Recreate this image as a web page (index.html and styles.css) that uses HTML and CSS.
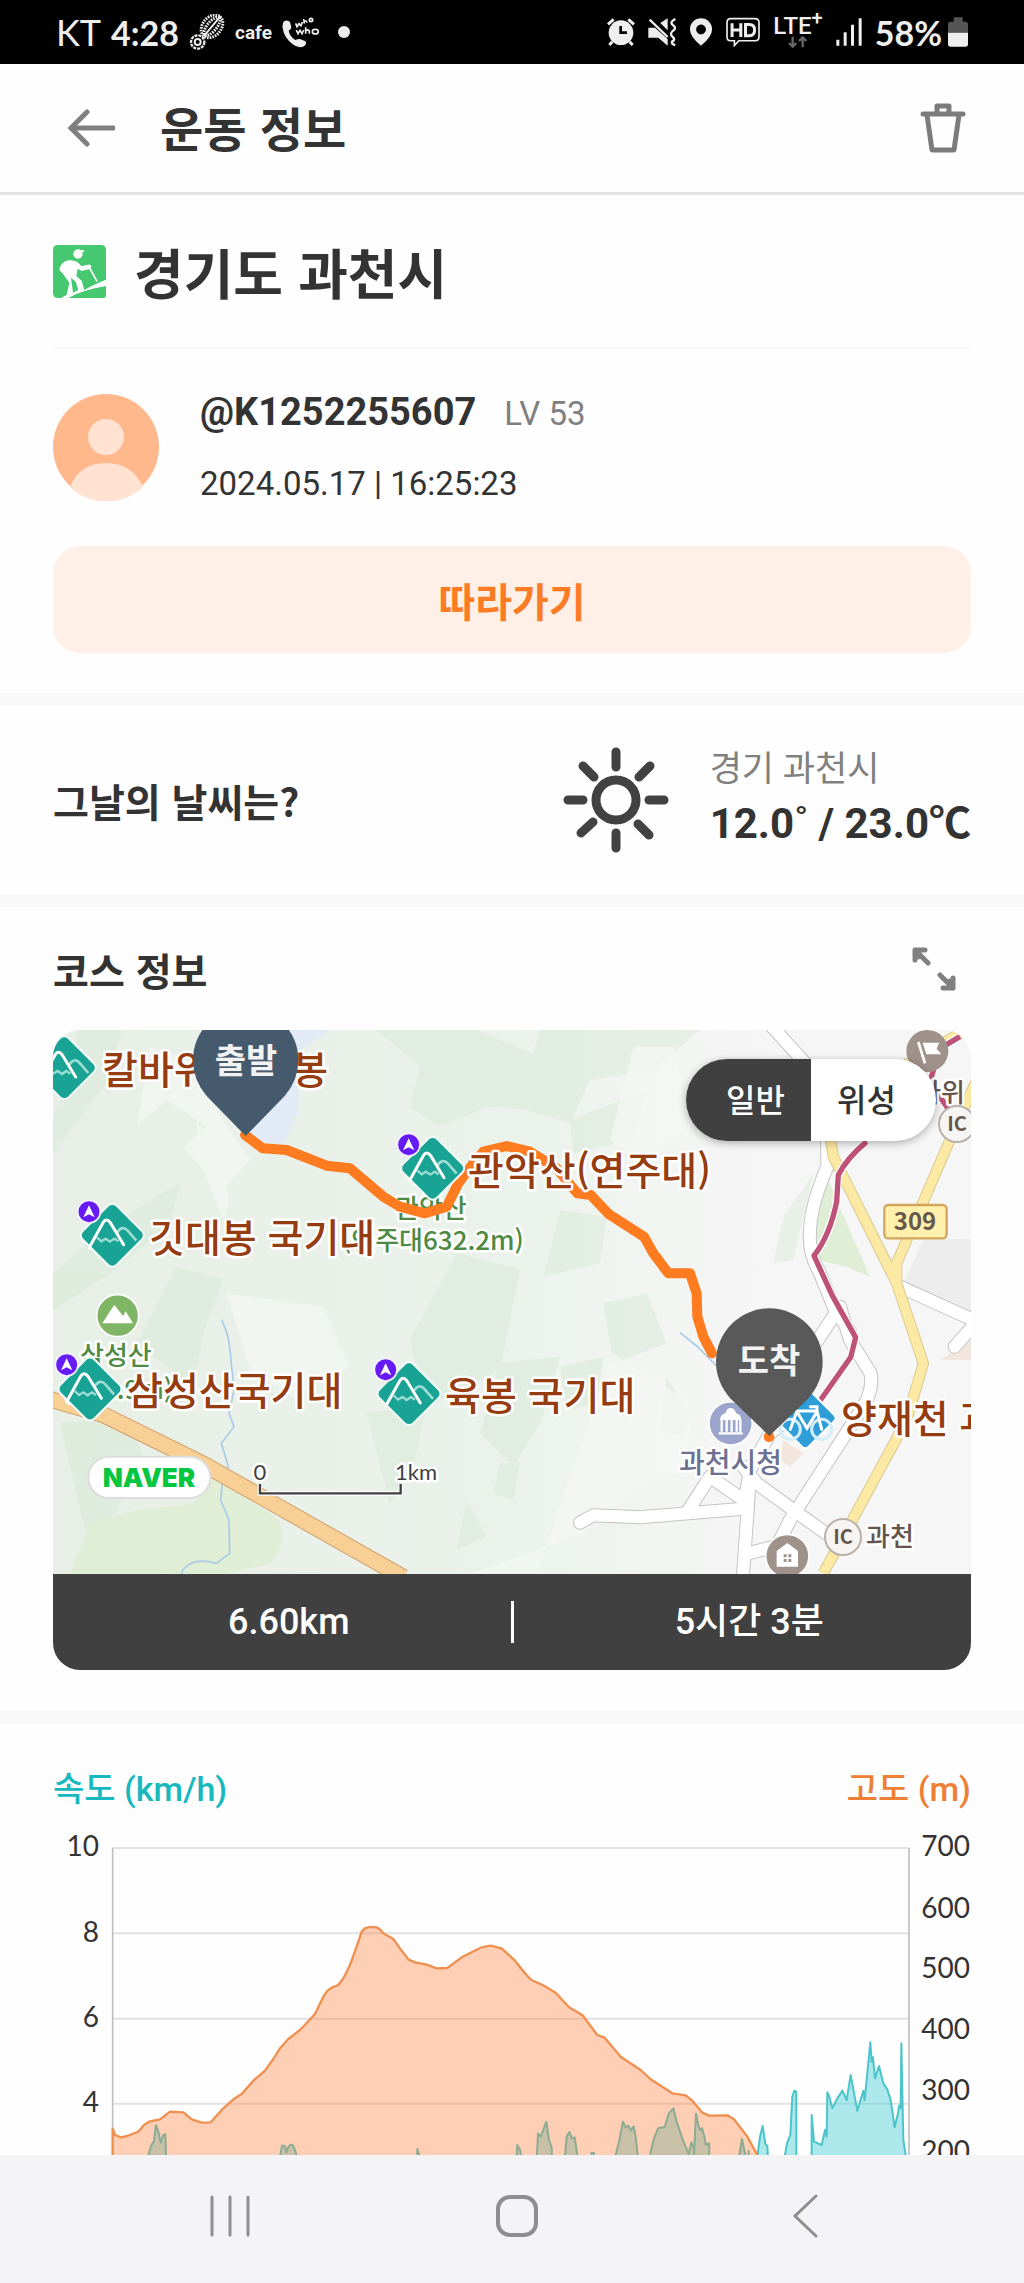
FILE: index.html
```html
<!DOCTYPE html>
<html lang="ko">
<head>
    <meta charset="UTF-8">
    <meta name="viewport" content="width=device-width, initial-scale=1">
    <title>운동 정보</title>
    <link rel="stylesheet" href="styles.css">
</head>
<body>
    <div class="status">
        <span class="carrier">KT</span>
        <span class="clock">4:28</span>
        <svg width="36" height="36" viewBox="568 44 108 108" fill="none" stroke="#eee">
            <g transform="rotate(-50 637 81)">
                <ellipse cx="637" cy="81" rx="38" ry="28" stroke-width="9" stroke-dasharray="5 3"/>
                <ellipse cx="637" cy="81" rx="34" ry="14" stroke-width="9" stroke-dasharray="5 3"/>
                <path d="M600 81h74" stroke-width="6"/>
            </g>
            <circle cx="594" cy="128" r="20" stroke-width="7" stroke-dasharray="9 3"/>
            <circle cx="594" cy="128" r="9" stroke-width="6"/>
        </svg>
        <span class="cafe">cafe</span>
        <svg width="38" height="32" viewBox="832 50 114 96">
            <path d="M838 66q10-6 18 2l4 16q0 6-8 10q4 18 20 28q10-4 16-2l14 6q6 8-4 15q-16 8-34-6q-26-20-30-48q-2-14 4-21z" fill="#eee"/>
            <path d="M873 72l4 10 6-9 6 6 4-11M897 59l2 14M899 67q6-5 8 3M914 62a5 5 0 1 0 10 0a5 5 0 1 0-10 0M875 92l5 11 6-10 6 10 5-11M903 84v19M903 95q8-7 11 1v7M923 97a8 6 0 1 0 18 0a8 6 0 1 0-18 0" fill="none" stroke="#eee" stroke-width="5"/>
        </svg>
        <span class="dot"></span>
        <div class="status-right">
            <svg width="28" height="28" viewBox="284 55 84 84">
                <circle cx="326" cy="99" r="37" fill="#eee"/>
                <path d="M287 74l17-15M365 74l-17-15M300 126l-9 10M352 126l9 10" stroke="#eee" stroke-width="9"/>
                <path d="M325 79v20h19" fill="none" stroke="#000" stroke-width="8"/>
            </svg>
            <svg width="28" height="28" viewBox="412 55 84 84">
                <path d="M413 84h20l38 34v20l-28-24h-30zM449 70l22-14v36z" fill="#eee"/>
                <path d="M417 60l54 52M494 58q-18 9-8 18q14 9 0 18q-10 9 0 18q10 8-2 14q-2 8 10 10" fill="none" stroke="#eee" stroke-width="7"/>
            </svg>
            <svg width="24" height="28" viewBox="541 53 72 86">
                <path d="M577 54a34 34 0 0 1 34 34q0 22-34 50q-34-28-34-50a34 34 0 0 1 34-34zM577 73a15 15 0 1 0 .1 0z" fill="#eee" fill-rule="evenodd"/>
            </svg>
            <svg width="34" height="30" viewBox="658 55 101 88" fill="none" stroke="#eee">
                <path d="M672 59h72q12 0 12 12v42q0 12-12 12h-48l-13 14v-14h-11q-11 0-11-12V71q0-12 11-12z" stroke-width="5"/>
                <path d="M676 73v41M702 73v41M676 93h26M716 77v33h11q16 0 16-17q0-16-16-16z" stroke-width="9"/>
            </svg>
            <div class="lte">
                <span>LTE<sup>+</sup></span>
                <svg width="20" height="12" viewBox="818 106 60 36" fill="none" stroke="#666" stroke-width="7">
                    <path d="M832 108v30M821 127l11 11 11-11M862 140v-30M851 121l11-11 11 11"/>
                </svg>
            </div>
            <svg width="26" height="28" viewBox="975 54 78 84" fill="#eee">
                <path d="M976 119h9v18h-9zM998 97h9v40h-9zM1020 74h9v63h-9zM1043 55h9v82h-9z"/>
            </svg>
            <div class="battery">
                <span class="percent">58%</span>
                <svg width="20" height="30" viewBox="1308 52 60 90">
                    <path d="M1325 53h27v13h8q8 0 8 8v25h-60V74q0-8 8-8h9z" fill="#555"/>
                    <path d="M1308 99h60v34q0 8-8 8h-44q-8 0-8-8z" fill="#eee"/>
                </svg>
            </div>
        </div>
    </div>

    <header class="topbar">
        <button class="icon-btn" aria-label="뒤로">
            <svg width="48" height="40" viewBox="0 0 48 40" fill="none" stroke="#808080" stroke-width="5" stroke-linecap="round">
                <path d="M20 4L4 20l16 16M4 20h42" />
            </svg>
        </button>
        <h1>운동 정보</h1>
        <button class="icon-btn" aria-label="삭제">
            <svg width="46" height="50" viewBox="0 0 46 50" fill="none" stroke="#7c7c7c" stroke-width="5" stroke-linecap="round" stroke-linejoin="round">
                <path d="M3 11h40M7 12l5 35h22l5-35"/>
                <path d="M17 10V3h12v7"/>
            </svg>
        </button>
    </header>

    <main>
        <section class="summary">
            <div class="place">
                <svg width="53" height="53" viewBox="160 734 159 159">
                    <rect x="160" y="734" width="159" height="159" rx="14" fill="#46c870"/>
                    <circle cx="235" cy="761" r="14" fill="#fff"/>
                    <path d="M233 749h20v6h-20z" fill="#fff"/>
                    <path d="M319 824v34q-75 12-112 35h-22l16-10 8-36-20-28q-12-6-9-16q6-18 26-23q14-2 26 4l14 14 18-5q10-2 11 6q0 6-7 8l-22 5-12-7-4 22 16 14 8 28q24-15 65-31q12-7 20-14z" fill="#fff"/>
                    <path d="M268 800l24 43" stroke="#fff" stroke-width="5"/>
                    <path d="M214 832l14 12 8 25-16 8z" fill="#46c870"/>
                    <path d="M319 858v27q0 8-8 8H207q50-25 112-35z" fill="#46c870"/>
                </svg>
                <h2>경기도 과천시</h2>
            </div>
            <div class="profile">
                <svg class="avatar" width="107" height="107" viewBox="0 0 107 107">
                    <circle cx="53" cy="53" r="53" fill="#ffb88c"/>
                    <circle cx="53" cy="43" r="18" fill="#ffe2d1"/>
                    <path d="M17 93C23 77 36 69 53 69s30 8 37 24a53 53 0 0 1-73 0z" fill="#ffe2d1"/>
                </svg>
                <div>
                    <p><strong class="nick">@K1252255607</strong><span class="level">LV 53</span></p>
                    <p class="date">2024.05.17 | 16:25:23</p>
                </div>
            </div>
            <button class="follow">따라가기</button>
        </section>

        <section class="weather">
            <h3>그날의 날씨는?</h3>
            <svg width="106" height="106" viewBox="-53 -53 106 106" fill="none" stroke="#424242" stroke-width="9" stroke-linecap="round">
                <circle r="20"/>
                <path d="M0-33v-15M0 33v15M-33 0h-15M33 0h15M-22-23l-11-11M23-23l11-11M-23 22l-12 11M22 24l11 11"/>
            </svg>
            <div>
                <p class="region">경기 과천시</p>
                <p class="temp">12.0˚ / 23.0℃</p>
            </div>
        </section>

        <section class="course">
            <div class="course-head">
                <h3>코스 정보</h3>
                <button class="icon-btn" aria-label="전체 화면">
                    <svg width="44" height="44" viewBox="0 0 44 44" fill="none" stroke="#808080" stroke-width="5" stroke-linecap="round" stroke-linejoin="round">
                        <path d="M3 13V3h10M3 3l13 13M6 5v5M41 31v10H31M41 41L28 28M38 39v-5"/>
                    </svg>
                </button>
            </div>
            <div class="card">
                <div class="map">
                    <svg class="map-svg" viewBox="0 0 918 544">
                        <defs>
                            <linearGradient id="ground" x1="0" x2="1" y1="0" y2="0">
                                <stop offset="0" stop-color="#e7efe7"/>
                                <stop offset=".5" stop-color="#ebf2eb"/>
                                <stop offset=".68" stop-color="#f3f5f3"/>
                                <stop offset=".8" stop-color="#f6f6f6"/>
                            </linearGradient>
                            <g id="peak">
                                <rect x="-72" y="-72" width="144" height="144" rx="18" transform="rotate(45)" fill="#19a394" stroke="#f3fbf8" stroke-width="6"/>
                                <path d="M14-8q16-24 32-6l26 30" fill="none" stroke="#9bdcd3" stroke-width="8"/>
                                <path d="M-46 6l13 12 13-8 13 9 13-9 12 8" fill="none" stroke="#9bdcd3" stroke-width="7"/>
                                <path d="M-70 38l42-76q10-16 22 0l40 66" fill="none" stroke="#fff" stroke-width="9" stroke-linecap="round"/>
                            </g>
                            <g id="compass">
                                <circle r="34" fill="#661bf5" stroke="#f4f0ff" stroke-width="5"/>
                                <path d="M0-19l17 36-17-9-17 9z" fill="#fff"/>
                            </g>
                            <g id="roads" fill="none" stroke-linejoin="round" stroke-linecap="round">
                                <path d="M2196 20L2360 200 2362 440Q2310 560 2310 640Q2305 700 2340 760L2385 870 2430 935"/>
                                <path d="M2300 1010L2400 860 2430 960 2492 1060Q2500 1110 2470 1160L2250 1500 2200 1600"/>
                                <path d="M2580 800L2800 900"/>
                                <path d="M2850 860L2744 980"/>
                                <path d="M1620 1508L1660 1486 1800 1492 2110 1466 2130 1350 2190 1240 2240 1200"/>
                                <path d="M2110 1340L2150 1390 2260 1470 2400 1570"/>
                                <path d="M2130 1370L2108 1680M2125 1600L2220 1575M1940 1478L2010 1370 2110 1440"/>
                            </g>
                            <path id="yellow" d="M2370 350l10 60 190 380 60 180 20 60-50 170-250 460M2570 790v-60l190-440 60-130M2570 150l190-110"/>
                            <path id="line4" d="M2760 50l-60 35-30 100 60 90M2480 365q-60 50-85 100l-5 80q-20 100-68 162l55 120 70 125-15 60-120 170"/>
                        </defs>
                        <rect width="918" height="544" fill="url(#ground)"/>
                        <g transform="translate(-13 -10) scale(.33333)">
                            <!-- forest -->
                            <g fill="#d3e8d3" opacity=".42">
                                <path d="M110 30h135l-40 150-165 220v-120l70-100zM1010 30h300l190 80-20 160-140-10-140 60-90-60 30-120z"/>
                                <path d="M40 760l160-140 220-130-30 120-180 150-170 110zM410 740l140 40-60 160-30 160-170-130z"/>
                                <path d="M1250 700l190 50-60 300-220 110-50-200z"/>
                                <path d="M1500 30h480l-140 120-190 30-60 130-160-50zM1590 300l230-90-40 150-180 40z"/>
                                <path d="M1560 570l140 20-20 140-170 40zM1690 850l130-30 60 150-160 60zM2230 590l90-130-60 260-60 10z"/>
                                <path d="M1380 1030l180-20-60 200-80 130-100-100zM980 1180l180-30-40 190-70 110zM1380 1330h60l-20 110-60-20zM1280 1440l60 110-90 40z"/>
                                <path d="M60 1210l200-20 50 120-90 180-80 60zM1560 1040l130-30-20 140-90 20zM1880 1070l70 120-20 60-70-20z"/>
                            </g>
                            <g fill="#f4f7f3" opacity=".75">
                                <path d="M330 80l120 40 60 120 120 180-80 90-60-60-60-70 70-60-120-80-90 80z"/>
                                <path d="M470 300l60 120 40 120-20 60-70-180zM1780 80l120 0 60 240-160 100-90-60z"/>
                                <path d="M1720 1000l220 140 30 200-180 60-160 140-340 120h200z"/>
                                <path d="M560 820l290 40 80 180-170 90-130-80z"/>
                            </g>
                            <path d="M740 30h130l-90 60-5 180-40 100h-70l-50-20 110-120z" fill="#e2eaf5"/>
                            <path d="M2360 470l130 300-70-30-90-20q-10-90 30-250zM90 1661l60-150 140-40 170-20 60-80 200 130q20 80-30 130l-140 31z" fill="#e1eed6"/>
                            <path d="M2590 790l60-130 150-5v240z" fill="#ededed"/>
                            <path d="M2700 1020l93-60v60zM2230 1260l60 40-40 40-30-20z" fill="#f2e6de"/>
                            <!-- streams -->
                            <path d="M545 900q20 40 25 90l12 120-15 70 15 40-38 50 18 60q10 40-15 60l-5 50 25 60 2 100-40 30q-70-20-100 20-20 60-70 55-60-40-120-30-40 20-70 50M1920 938l50 40 60 60" fill="none" stroke="#a9cbe8" stroke-width="5"/>
                            <!-- roads -->
                            <use href="#roads" stroke="#c4c4c4" stroke-width="42"/>
                            <use href="#roads" stroke="#fff" stroke-width="36"/>
                            <g fill="none" stroke-linejoin="round">
                                <path d="M30 1138l160 46 300 148 600 340" stroke="#cfa06a" stroke-width="50"/>
                                <path d="M30 1138l160 46 300 148 600 340" stroke="#f8cf95" stroke-width="44"/>
                                <use href="#yellow" stroke="#d9c98f" stroke-width="34"/>
                                <use href="#yellow" stroke="#fbe9a4" stroke-width="28"/>
                                <use href="#line4" stroke="#fff" stroke-width="24"/>
                                <use href="#line4" stroke="#bf5278" stroke-width="16"/>
                            </g>
                        </g>
                        <g class="area">
                            <text x="342" y="188">관악산</text>
                            <text x="289" y="220">(연주대632.2m)</text>
                            <text x="27" y="335">삼성산</text>
                            <text x="10" y="369">(480.9m)</text>
                        </g>
                        <g transform="translate(-13 -10) scale(.33333)">
                            <!-- course -->
                            <path d="M615 345l53 40 72 5 120 47 70 8 100 85 50 30 75 20 65-20 35-70 45-60 30-35 70-17 70 17 80 50 62 75 40 5 55 58 105 67 28 50 45 60h65l20 60 2 70 18 60 26 50" fill="none" stroke="#ff7b1f" stroke-width="30" stroke-linejoin="round" stroke-linecap="round"/>
                            <circle cx="2187" cy="1250" r="16" fill="#ff7b1f"/>
                            <use href="#peak" x="73" y="143"/>
                            <use href="#peak" x="1178" y="445"/>
                            <use href="#compass" x="1106" y="374"/>
                            <use href="#peak" x="217" y="646"/>
                            <use href="#compass" x="147" y="575"/>
                            <!-- Samseongsan -->
                            <circle cx="233" cy="887" r="63" fill="#7fb564" stroke="#fff" stroke-width="5"/>
                            <path d="M187 910l36-56 26 34 8-14 22 36z" fill="#fff"/>
                            <use href="#peak" x="150" y="1107"/>
                            <use href="#compass" x="80" y="1034"/>
                            <use href="#peak" x="1107" y="1121"/>
                            <use href="#compass" x="1037" y="1049"/>
                            <!-- city hall -->
                            <circle cx="2072" cy="1210" r="65" fill="#9ba4cb" stroke="#fff" stroke-width="5"/>
                            <path d="M2036 1240h72M2045 1235v-35M2060 1235v-35M2075 1235v-35M2090 1235v-35M2101 1235v-35" stroke="#fff" stroke-width="7"/>
                            <path d="M2040 1200q2-18 16-20q4-16 16-16t16 16q14 2 16 20z" fill="#fff"/>
                            <!-- bicycle path -->
                            <rect x="-68" y="-68" width="136" height="136" rx="14" transform="translate(2296 1194) rotate(45)" fill="#2d9ed8" stroke="#fff" stroke-width="6"/>
                            <g fill="none" stroke="#fff" stroke-width="9" stroke-linecap="round">
                                <circle cx="2251" cy="1228" r="30" stroke="#d4edf9"/>
                                <circle cx="2345" cy="1228" r="30" stroke="#d4edf9"/>
                                <path d="M2251 1228l20-55h60l14 55M2271 1175l30 50 30-50M2331 1175v-15h-20"/>
                            </g>
                            <!-- flag, house -->
                            <circle cx="2662" cy="93" r="63" fill="#9f928a"/>
                            <path d="M2635 66l20 64" stroke="#fff" stroke-width="8"/>
                            <path d="M2648 68h50l-8 18 14 17h-45z" fill="#fff"/>
                            <circle cx="2242" cy="1608" r="65" fill="#9f928a" stroke="#fff" stroke-width="5"/>
                            <path d="M2210 1640v-47l32-24 32 24v47z" fill="#fff"/>
                            <path d="M2231 1603h9v9h-9zM2245 1603h9v9h-9zM2231 1617h9v9h-9zM2245 1617h9v9h-9z" fill="#9f928a"/>
                            <rect x="2533" y="555" width="187" height="100" rx="12" fill="#fff1ac" stroke="#d4a55f" stroke-width="7"/>
                            <!-- scale bar -->
                            <path d="M660 1392v28h422v-28" fill="none" stroke="#fff" stroke-width="14"/>
                            <path d="M660 1392v28h422v-28" fill="none" stroke="#404040" stroke-width="7"/>
                            <rect x="145" y="1310" width="366" height="124" rx="62" fill="#fff" stroke="#ddd" stroke-width="6"/>
                        </g>
                        <g class="peaks">
                            <text x="49" y="54">칼바위 국기봉</text>
                            <text x="415" y="155">관악산(연주대)</text>
                            <text x="96" y="222">깃대봉 국기대</text>
                            <text x="74" y="375">삼성산국기대</text>
                            <text x="392" y="380">육봉 국기대</text>
                            <text x="788" y="403">양재천 과천</text>
                        </g>
                        <g class="area">
                            <text class="hall" x="626" y="443">과천시청</text>
                            <text class="brown" x="813" y="516">과천</text>
                            <text class="brown" x="864" y="72">바위</text>
                        </g>
                        <g fill="#f7f5f4" stroke="#b9b0aa" stroke-width="2">
                            <circle cx="790" cy="507" r="18"/>
                            <circle cx="904" cy="94" r="18"/>
                        </g>
                        <g class="signs">
                            <text x="790" y="514">IC</text>
                            <text x="904" y="101">IC</text>
                            <text class="route-no" x="862" y="200">309</text>
                        </g>
                        <text class="naver" x="96" y="457">NAVER</text>
                        <g class="scale">
                            <text x="207" y="450">0</text>
                            <text x="363" y="450">1km</text>
                        </g>
                        <g transform="translate(-13 -10) scale(.33333)">
                            <path d="M617 348L500 228Q459 180 459 120a158 158 0 0 1 316 0q0 60-41 108z" fill="#465a6e"/>
                            <path d="M2188 1248L2072 1136Q2028 1086 2028 1025a160 160 0 0 1 320 0q0 61-44 111z" fill="#595959"/>
                        </g>
                        <g class="pins">
                            <text x="193" y="43">출발</text>
                            <text x="716" y="343">도착</text>
                        </g>
                    </svg>
                    <div class="switch">
                        <button class="on">일반</button>
                        <button>위성</button>
                    </div>
                </div>
                <div class="stats">
                    <span>6.60km</span>
                    <span>5시간 3분</span>
                </div>
            </div>
        </section>

        <section class="graph">
            <div class="graph-head">
                <span class="speed">속도 (km/h)</span>
                <span class="height">고도 (m)</span>
            </div>
            <svg class="chart" viewBox="0 0 918 640">
                <g transform="translate(-13 -80) scale(.33333)">
                    <path d="M218 324H2607M218 580H2607M218 836H2607M218 1091H2607M218 1347H2607" stroke="#e2e2e2" stroke-width="6"/>
                    <path d="M218 324V1603M2607 324V1603" stroke="#c0c0c0" stroke-width="5"/>
                    <!-- speed -->
                    <path class="speed-area" d="M326 1300V1245l6-25 10-18 6-46 8 22 6 30 8-22 6-4 2 63v55zM721 1300V1245l5-28 8 0 5 20 5-15 8-8 8 3 10 28v55zM1132 1300v-73l6 20v53zM1430 1300V1245l2-30 8 14 3 16v55zM1488 1300L1494 1180 1502 1190 1506 1180 1519 1145 1527 1200 1535 1222 1537 1300zM1575 1300V1245l5-55 8-14 8 20 8-4 8 53v55zM1654 1300v-61h8v61zM1727 1300V1245l10-40 12-60 8 18 8-6 8 14 8-12 6 30 6 56v55zM1830 1300V1245l12-50 12-30 20-4 12-40 14-16 10 40 6 18 12 35 18 44 8-35 8 20v18l6-124 6 30 6 20 6-6 6 20 6 30 10-5v112zM2098 1300V1245l8-48 10 48v55zM2126 1300v-67l4 67zM2154 1300v-65l6-45 8-32 8 54 6 6 4 82zM2235 1300V1245l6-35 10-25 6-115 6-18 6 2v246z"/>
                    <path class="speed-area" d="M2315 1300V1125L2322 1205 2345 1215 2355 1170 2360 1190 2362 1057 2368 1070 2377 1105 2392 1075 2407 1052 2420 1080 2432 1005 2452 1112 2470 1052 2474 1080 2491 907 2495 965 2499 952 2505 1015 2517 978 2530 1030 2542 1048 2552 1080 2564 1162 2574 1120 2577 1097 2582 1105 2584 910 2590 1200 2597 1245V1300z"/>
                    <!-- altitude -->
                    <path class="alt-area" d="M218 1166L225 1185 243 1192 262 1188 295 1175 312 1155 330 1144 360 1138 390 1115 430 1117 455 1138 485 1148 512 1147 550 1105 580 1078 605 1062 640 1022 675 992 700 957 720 925 745 897 780 870 825 822 850 770 862 752 877 742 895 735 912 712 930 675 950 620 965 575 975 565 988 561 1010 562 1022 570 1030 580 1060 597 1080 625 1105 658 1125 667 1160 674 1190 685 1222 684 1265 652 1325 622 1352 617 1385 625 1425 662 1455 700 1474 720 1512 737 1547 758 1587 802 1627 825 1672 885 1694 893 1742 950 1802 990 1832 1018 1897 1060 1937 1066 1957 1082 1987 1118 2007 1127 2062 1126 2082 1138 2122 1190 2152 1245 2220 1400V1603H218z"/>
                </g>
                <g class="axis">
                    <text x="46" y="36">10</text>
                    <text x="46" y="122">8</text>
                    <text x="46" y="207">6</text>
                    <text x="46" y="292">4</text>
                    <text x="917" y="36">700</text>
                    <text x="917" y="98">600</text>
                    <text x="917" y="158">500</text>
                    <text x="917" y="219">400</text>
                    <text x="917" y="280">300</text>
                    <text x="917" y="341">200</text>
                </g>
            </svg>
        </section>
    </main>

    <nav class="navbar">
        <button class="icon-btn" aria-label="최근 앱">
            <svg width="42" height="42" viewBox="0 0 42 42" stroke="#8e8e90" stroke-width="3" stroke-linecap="round">
                <path d="M3 2v38M21 2v38M39 2v38"/>
            </svg>
        </button>
        <button class="icon-btn" aria-label="홈">
            <svg width="42" height="42" viewBox="0 0 42 42" fill="none" stroke="#8e8e90" stroke-width="4">
                <rect x="2" y="2" width="38" height="38" rx="12"/>
            </svg>
        </button>
        <button class="icon-btn nav-back" aria-label="뒤로 가기">
            <svg width="26" height="44" viewBox="0 0 26 44" fill="none" stroke="#8e8e90" stroke-width="3" stroke-linecap="round">
                <path d="M24 2L3 22l21 20"/>
            </svg>
        </button>
    </nav>
</body>
</html>
```
FILE: styles.css
```css
* {
    margin: 0;
    padding: 0;
    box-sizing: border-box;
}
body {
    display: flex;
    flex-direction: column;
    height: 100vh;
    background: #fefefe;
    color: #333;
    font-family: Roboto, "Noto Sans CJK KR", sans-serif;
}
button {
    border: none;
    background: none;
    font-family: inherit;
    color: inherit;
}
svg {
    display: block;
    flex: none;
}
h1, h2, h3 {
    font-family: "Noto Sans CJK KR", sans-serif;
    font-weight: 700;
}

/* status bar */
.status {
    display: flex;
    align-items: center;
    flex: none;
    gap: 10px;
    height: 64px;
    padding: 0 56px;
    background: #000;
    color: #eee;
    font-family: Lato, sans-serif;
}
.carrier {
    font-size: 36px;
}
.clock,
.percent {
    font-size: 34px;
    font-weight: 700;
}
.cafe {
    font-family: Roboto, sans-serif;
    font-size: 19px;
    font-weight: 700;
}
.dot {
    width: 12px;
    height: 12px;
    margin-left: 8px;
    border-radius: 50%;
    background: #eee;
}
.status-right {
    display: flex;
    align-items: center;
    gap: 13px;
    margin-left: auto;
}
.battery {
    display: flex;
    align-items: center;
    gap: 6px;
}
.lte {
    display: flex;
    flex-direction: column;
    align-items: center;
    font-family: Roboto, sans-serif;
    font-size: 24px;
    font-weight: 500;
    line-height: 20px;
}
.lte sup {
    font-size: 20px;
    line-height: 0;
}

/* top bar */
.topbar {
    display: flex;
    align-items: center;
    flex: none;
    height: 131px;
    padding: 0 58px 0 67px;
    border-bottom: 3px solid #e4e4e4;
}
.topbar h1 {
    flex: 1;
    margin-left: 45px;
    padding-bottom: 4px;
    font-size: 47px;
}

main {
    flex: 1;
    min-height: 0;
    overflow-y: auto;
    scrollbar-width: none;
}
section {
    padding: 0 53px;
    border-bottom: 13px solid #f9f9f9;
}
h3 {
    font-size: 39px;
}

.place {
    display: flex;
    align-items: center;
    gap: 28px;
    height: 155px;
    border-bottom: 3px solid #f8f8f8;
}
.place h2 {
    font-size: 54px;
}
.profile {
    display: flex;
    align-items: center;
    gap: 40px;
    margin: 44px 0 45px;
    height: 107px;
}
.profile p {
    line-height: 64px;
}
.nick {
    font-size: 38px;
}
.level {
    margin-left: 28px;
    font-size: 33px;
    color: #808080;
}
.date {
    font-size: 33px;
}
.follow {
    display: block;
    width: 100%;
    height: 107px;
    margin-bottom: 40px;
    border-radius: 27px;
    background: #fff0e7;
    color: #fb7c24;
    font-size: 40px;
    font-weight: 700;
}

.weather {
    display: flex;
    align-items: center;
    gap: 41px;
    height: 201px;
}
.weather h3 {
    flex: 1;
}
.region {
    font-size: 35px;
    line-height: 48px;
    color: #808080;
}
.temp {
    font-size: 42px;
    font-weight: 700;
    line-height: 60px;
}

.course {
    padding-bottom: 41px;
}
.course-head {
    display: flex;
    align-items: center;
    justify-content: space-between;
    height: 123px;
    padding-right: 15px;
}
.card {
    overflow: hidden;
    border-radius: 27px;
}
.map {
    position: relative;
}
.map-svg,
.chart {
    width: 100%;
    height: auto;
}
.map-svg text {
    font-family: "Noto Sans CJK KR", sans-serif;
    font-weight: 500;
    paint-order: stroke;
    stroke: #fff;
    stroke-width: 5px;
    stroke-linejoin: round;
}
.peaks {
    font-size: 39px;
    fill: #953c10;
}
.area {
    font-size: 26px;
    fill: #4f8a45;
}
.area .hall {
    font-size: 28px;
    fill: #6b7192;
}
.area .brown {
    fill: #66544c;
}
.signs {
    font-size: 20px;
    fill: #66584c;
    text-anchor: middle;
}
.signs .route-no {
    font-size: 24px;
}
.map-svg .signs text,
.map-svg .pins text,
.map-svg .naver {
    stroke: none;
    font-weight: 700;
}
.map-svg .naver {
    font-family: Inter, sans-serif;
    font-size: 26px;
    font-weight: 900;
    fill: #03c740;
    text-anchor: middle;
}
.map-svg .scale text {
    font-family: Lato, sans-serif;
    font-size: 22px;
    font-weight: 400;
    fill: #404040;
    text-anchor: middle;
}
.pins {
    font-size: 34px;
    fill: #f2f2f2;
    text-anchor: middle;
}
.switch {
    position: absolute;
    top: 29px;
    right: 35px;
    display: flex;
    border-radius: 41px;
    overflow: hidden;
    background: #fff;
    box-shadow: 0 2px 8px rgba(0, 0, 0, 0.3);
}
.switch button {
    width: 125px;
    height: 82px;
    padding: 0 14px 4px 0;
    font-size: 32px;
    font-weight: 500;
}
.switch .on {
    padding: 0 0 4px 14px;
    background: #404040;
    color: #fff;
}
.stats {
    display: flex;
    align-items: center;
    height: 96px;
    background: #404040;
    color: #fff;
    font-size: 36px;
    font-weight: 500;
}
.stats span {
    flex: 1;
    padding-left: 14px;
    line-height: 42px;
    text-align: center;
}
.stats span + span {
    border-left: 3px solid #fff;
}

.graph-head {
    display: flex;
    align-items: center;
    justify-content: space-between;
    height: 96px;
    padding-top: 28px;
    font-size: 34px;
    font-weight: 500;
}
.speed {
    color: #17b8be;
}
.height {
    color: #ef7f35;
}
.speed-area {
    fill: rgba(70, 205, 212, 0.45);
    stroke: #4cc5ca;
    stroke-width: 6;
    stroke-linejoin: round;
}
.alt-area {
    fill: rgba(255, 125, 50, 0.36);
    stroke: #f09050;
    stroke-width: 7;
    stroke-linejoin: round;
}
.axis {
    font-family: Lato, sans-serif;
    font-size: 28px;
    fill: #333;
    text-anchor: end;
}

/* system navigation */
.navbar {
    display: flex;
    align-items: center;
    justify-content: space-between;
    flex: none;
    height: 128px;
    padding: 0 206px 6px 209px;
    background: #f4f4f7;
}
.nav-back {
    padding-left: 10px;
}
```
